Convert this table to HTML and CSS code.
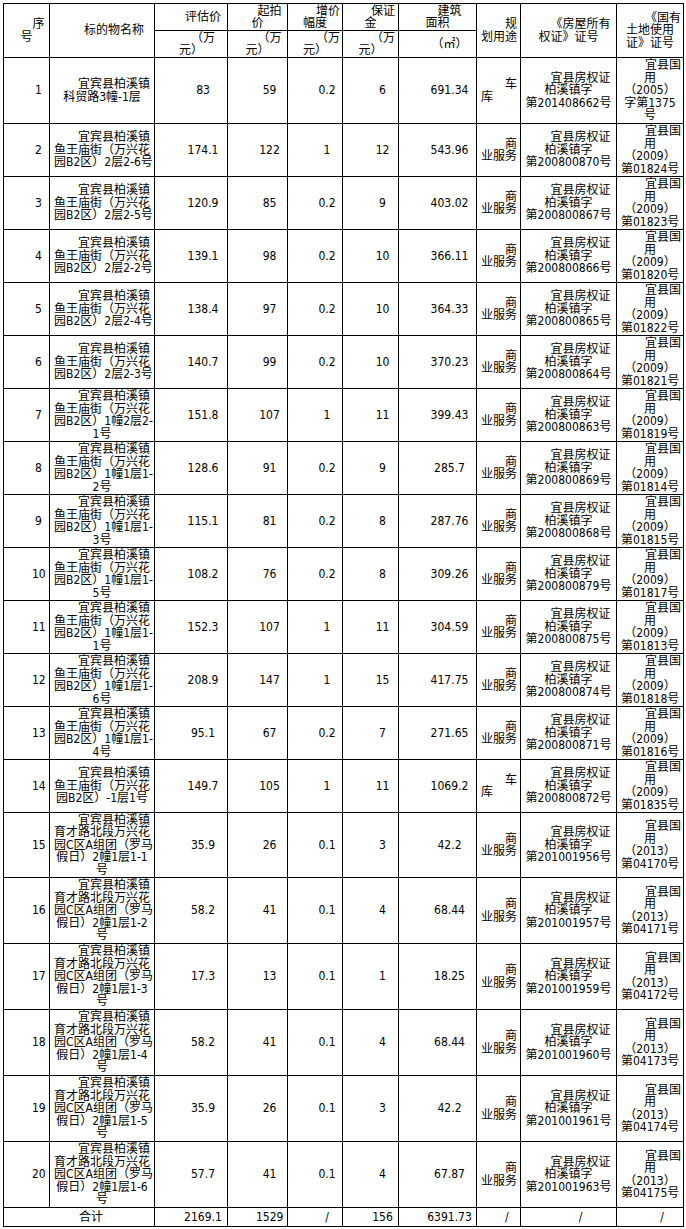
FILE: index.html
```html
<!DOCTYPE html>
<html lang="zh-CN">
<head>
<meta charset="utf-8">
<title>标的物清单</title>
<link rel="stylesheet" href="styles.css">
</head>
<body>
<table class="sheet">
<colgroup>
<col class="c1"><col class="c2"><col class="c3"><col class="c4"><col class="c5"><col class="c6"><col class="c7"><col class="c8"><col class="c9"><col class="c10">
</colgroup>
<thead>
<tr class="ha">
<th rowspan="2">序<br>号</th>
<th rowspan="2">标的物名称</th>
<th>评估价</th>
<th>起拍<br>价</th>
<th>增价<br>幅度</th>
<th>保证<br>金</th>
<th>建筑<br>面积</th>
<th rowspan="2" class="use">规<br>划用途</th>
<th rowspan="2">《房屋所有<br>权证》证号</th>
<th rowspan="2">《国有<br>土地使用<br>证》证号</th>
</tr>
<tr class="hb">
<th>（万<br>元）</th>
<th>（万<br>元）</th>
<th>（万<br>元）</th>
<th>（万<br>元）</th>
<th>（㎡）</th>
</tr>
</thead>
<tbody>
<tr class="tall"><td>1</td><td>宜宾县柏溪镇<br>科贸路3幢-1层</td><td>83</td><td>59</td><td>0.2</td><td>6</td><td>691.34</td><td class="use">车<br>库</td><td>宜县房权证<br>柏溪镇字<br>第201408662号</td><td>宜县国<br>用<br>（2005）<br>字第1375<br>号</td></tr>
<tr class="mid"><td>2</td><td>宜宾县柏溪镇<br>鱼王庙街（万兴花<br>园B2区）2层2-6号</td><td>174.1</td><td>122</td><td>1</td><td>12</td><td>543.96</td><td class="use">商<br>业服务</td><td>宜县房权证<br>柏溪镇字<br>第200800870号</td><td>宜县国<br>用<br>（2009）<br>第01824号</td></tr>
<tr class="mid"><td>3</td><td>宜宾县柏溪镇<br>鱼王庙街（万兴花<br>园B2区）2层2-5号</td><td>120.9</td><td>85</td><td>0.2</td><td>9</td><td>403.02</td><td class="use">商<br>业服务</td><td>宜县房权证<br>柏溪镇字<br>第200800867号</td><td>宜县国<br>用<br>（2009）<br>第01823号</td></tr>
<tr class="mid"><td>4</td><td>宜宾县柏溪镇<br>鱼王庙街（万兴花<br>园B2区）2层2-2号</td><td>139.1</td><td>98</td><td>0.2</td><td>10</td><td>366.11</td><td class="use">商<br>业服务</td><td>宜县房权证<br>柏溪镇字<br>第200800866号</td><td>宜县国<br>用<br>（2009）<br>第01820号</td></tr>
<tr class="mid"><td>5</td><td>宜宾县柏溪镇<br>鱼王庙街（万兴花<br>园B2区）2层2-4号</td><td>138.4</td><td>97</td><td>0.2</td><td>10</td><td>364.33</td><td class="use">商<br>业服务</td><td>宜县房权证<br>柏溪镇字<br>第200800865号</td><td>宜县国<br>用<br>（2009）<br>第01822号</td></tr>
<tr class="mid"><td>6</td><td>宜宾县柏溪镇<br>鱼王庙街（万兴花<br>园B2区）2层2-3号</td><td>140.7</td><td>99</td><td>0.2</td><td>10</td><td>370.23</td><td class="use">商<br>业服务</td><td>宜县房权证<br>柏溪镇字<br>第200800864号</td><td>宜县国<br>用<br>（2009）<br>第01821号</td></tr>
<tr class="mid"><td>7</td><td>宜宾县柏溪镇<br>鱼王庙街（万兴花<br>园B2区）1幢2层2-<br>1号</td><td>151.8</td><td>107</td><td>1</td><td>11</td><td>399.43</td><td class="use">商<br>业服务</td><td>宜县房权证<br>柏溪镇字<br>第200800863号</td><td>宜县国<br>用<br>（2009）<br>第01819号</td></tr>
<tr class="mid"><td>8</td><td>宜宾县柏溪镇<br>鱼王庙街（万兴花<br>园B2区）1幢1层1-<br>2号</td><td>128.6</td><td>91</td><td>0.2</td><td>9</td><td>285.7</td><td class="use">商<br>业服务</td><td>宜县房权证<br>柏溪镇字<br>第200800869号</td><td>宜县国<br>用<br>（2009）<br>第01814号</td></tr>
<tr class="mid"><td>9</td><td>宜宾县柏溪镇<br>鱼王庙街（万兴花<br>园B2区）1幢1层1-<br>3号</td><td>115.1</td><td>81</td><td>0.2</td><td>8</td><td>287.76</td><td class="use">商<br>业服务</td><td>宜县房权证<br>柏溪镇字<br>第200800868号</td><td>宜县国<br>用<br>（2009）<br>第01815号</td></tr>
<tr class="mid"><td>10</td><td>宜宾县柏溪镇<br>鱼王庙街（万兴花<br>园B2区）1幢1层1-<br>5号</td><td>108.2</td><td>76</td><td>0.2</td><td>8</td><td>309.26</td><td class="use">商<br>业服务</td><td>宜县房权证<br>柏溪镇字<br>第200800879号</td><td>宜县国<br>用<br>（2009）<br>第01817号</td></tr>
<tr class="mid"><td>11</td><td>宜宾县柏溪镇<br>鱼王庙街（万兴花<br>园B2区）1幢1层1-<br>1号</td><td>152.3</td><td>107</td><td>1</td><td>11</td><td>304.59</td><td class="use">商<br>业服务</td><td>宜县房权证<br>柏溪镇字<br>第200800875号</td><td>宜县国<br>用<br>（2009）<br>第01813号</td></tr>
<tr class="mid"><td>12</td><td>宜宾县柏溪镇<br>鱼王庙街（万兴花<br>园B2区）1幢1层1-<br>6号</td><td>208.9</td><td>147</td><td>1</td><td>15</td><td>417.75</td><td class="use">商<br>业服务</td><td>宜县房权证<br>柏溪镇字<br>第200800874号</td><td>宜县国<br>用<br>（2009）<br>第01818号</td></tr>
<tr class="mid"><td>13</td><td>宜宾县柏溪镇<br>鱼王庙街（万兴花<br>园B2区）1幢1层1-<br>4号</td><td>95.1</td><td>67</td><td>0.2</td><td>7</td><td>271.65</td><td class="use">商<br>业服务</td><td>宜县房权证<br>柏溪镇字<br>第200800871号</td><td>宜县国<br>用<br>（2009）<br>第01816号</td></tr>
<tr class="mid"><td>14</td><td>宜宾县柏溪镇<br>鱼王庙街（万兴花<br>园B2区）-1层1号</td><td>149.7</td><td>105</td><td>1</td><td>11</td><td>1069.2</td><td class="use">车<br>库</td><td>宜县房权证<br>柏溪镇字<br>第200800872号</td><td>宜县国<br>用<br>（2009）<br>第01835号</td></tr>
<tr class="tall t65"><td>15</td><td>宜宾县柏溪镇<br>育才路北段万兴花<br>园C区A组团（罗马<br>假日）2幢1层1-1<br>号</td><td>35.9</td><td>26</td><td>0.1</td><td>3</td><td>42.2</td><td class="use">商<br>业服务</td><td>宜县房权证<br>柏溪镇字<br>第201001956号</td><td>宜县国<br>用<br>（2013）<br>第04170号</td></tr>
<tr class="tall"><td>16</td><td>宜宾县柏溪镇<br>育才路北段万兴花<br>园C区A组团（罗马<br>假日）2幢1层1-2<br>号</td><td>58.2</td><td>41</td><td>0.1</td><td>4</td><td>68.44</td><td class="use">商<br>业服务</td><td>宜县房权证<br>柏溪镇字<br>第201001957号</td><td>宜县国<br>用<br>（2013）<br>第04171号</td></tr>
<tr class="tall"><td>17</td><td>宜宾县柏溪镇<br>育才路北段万兴花<br>园C区A组团（罗马<br>假日）2幢1层1-3<br>号</td><td>17.3</td><td>13</td><td>0.1</td><td>1</td><td>18.25</td><td class="use">商<br>业服务</td><td>宜县房权证<br>柏溪镇字<br>第201001959号</td><td>宜县国<br>用<br>（2013）<br>第04172号</td></tr>
<tr class="tall"><td>18</td><td>宜宾县柏溪镇<br>育才路北段万兴花<br>园C区A组团（罗马<br>假日）2幢1层1-4<br>号</td><td>58.2</td><td>41</td><td>0.1</td><td>4</td><td>68.44</td><td class="use">商<br>业服务</td><td>宜县房权证<br>柏溪镇字<br>第201001960号</td><td>宜县国<br>用<br>（2013）<br>第04173号</td></tr>
<tr class="tall"><td>19</td><td>宜宾县柏溪镇<br>育才路北段万兴花<br>园C区A组团（罗马<br>假日）2幢1层1-5<br>号</td><td>35.9</td><td>26</td><td>0.1</td><td>3</td><td>42.2</td><td class="use">商<br>业服务</td><td>宜县房权证<br>柏溪镇字<br>第201001961号</td><td>宜县国<br>用<br>（2013）<br>第04174号</td></tr>
<tr class="tall"><td>20</td><td>宜宾县柏溪镇<br>育才路北段万兴花<br>园C区A组团（罗马<br>假日）2幢1层1-6<br>号</td><td>57.7</td><td>41</td><td>0.1</td><td>4</td><td>67.87</td><td class="use">商<br>业服务</td><td>宜县房权证<br>柏溪镇字<br>第201001963号</td><td>宜县国<br>用<br>（2013）<br>第04175号</td></tr>
<tr class="sum"><td colspan="2">合计</td><td>2169.1</td><td>1529</td><td>/</td><td>156</td><td>6391.73</td><td class="use">/</td><td>/</td><td>/</td></tr>
</tbody>
</table>
</body>
</html>
```
FILE: styles.css
```css
html, body {
  margin: 0;
  background: #fff;
}
body {
  padding: 3px 0 0 3px;
  font-family: "DejaVu Sans Condensed", "Noto Sans CJK SC", sans-serif;
  font-size: 12px;
  color: #000;
}
.sheet {
  border-collapse: collapse;
  table-layout: fixed;
  width: 681px;
}
.c1 { width: 46px; }
.c2 { width: 105px; }
.c3 { width: 73px; }
.c4 { width: 60px; }
.c5 { width: 55px; }
.c6 { width: 56px; }
.c7 { width: 78px; }
.c8 { width: 44px; }
.c9 { width: 96px; }
.c10 { width: 67px; }
.sheet th,
.sheet td {
  border: 1px solid #000;
  padding: 0 4px;
  text-align: center;
  text-indent: 2em;
  vertical-align: middle;
  line-height: 12.5px;
  white-space: nowrap;
  overflow: hidden;
  font-weight: normal;
}
.sheet .use {
  text-align: left;
}
.ha, .hb { height: 27px; }
.mid { height: 53px; }
.tall { height: 66px; }
.tall.t65 { height: 65px; }
.sum { height: 19px; }
```
